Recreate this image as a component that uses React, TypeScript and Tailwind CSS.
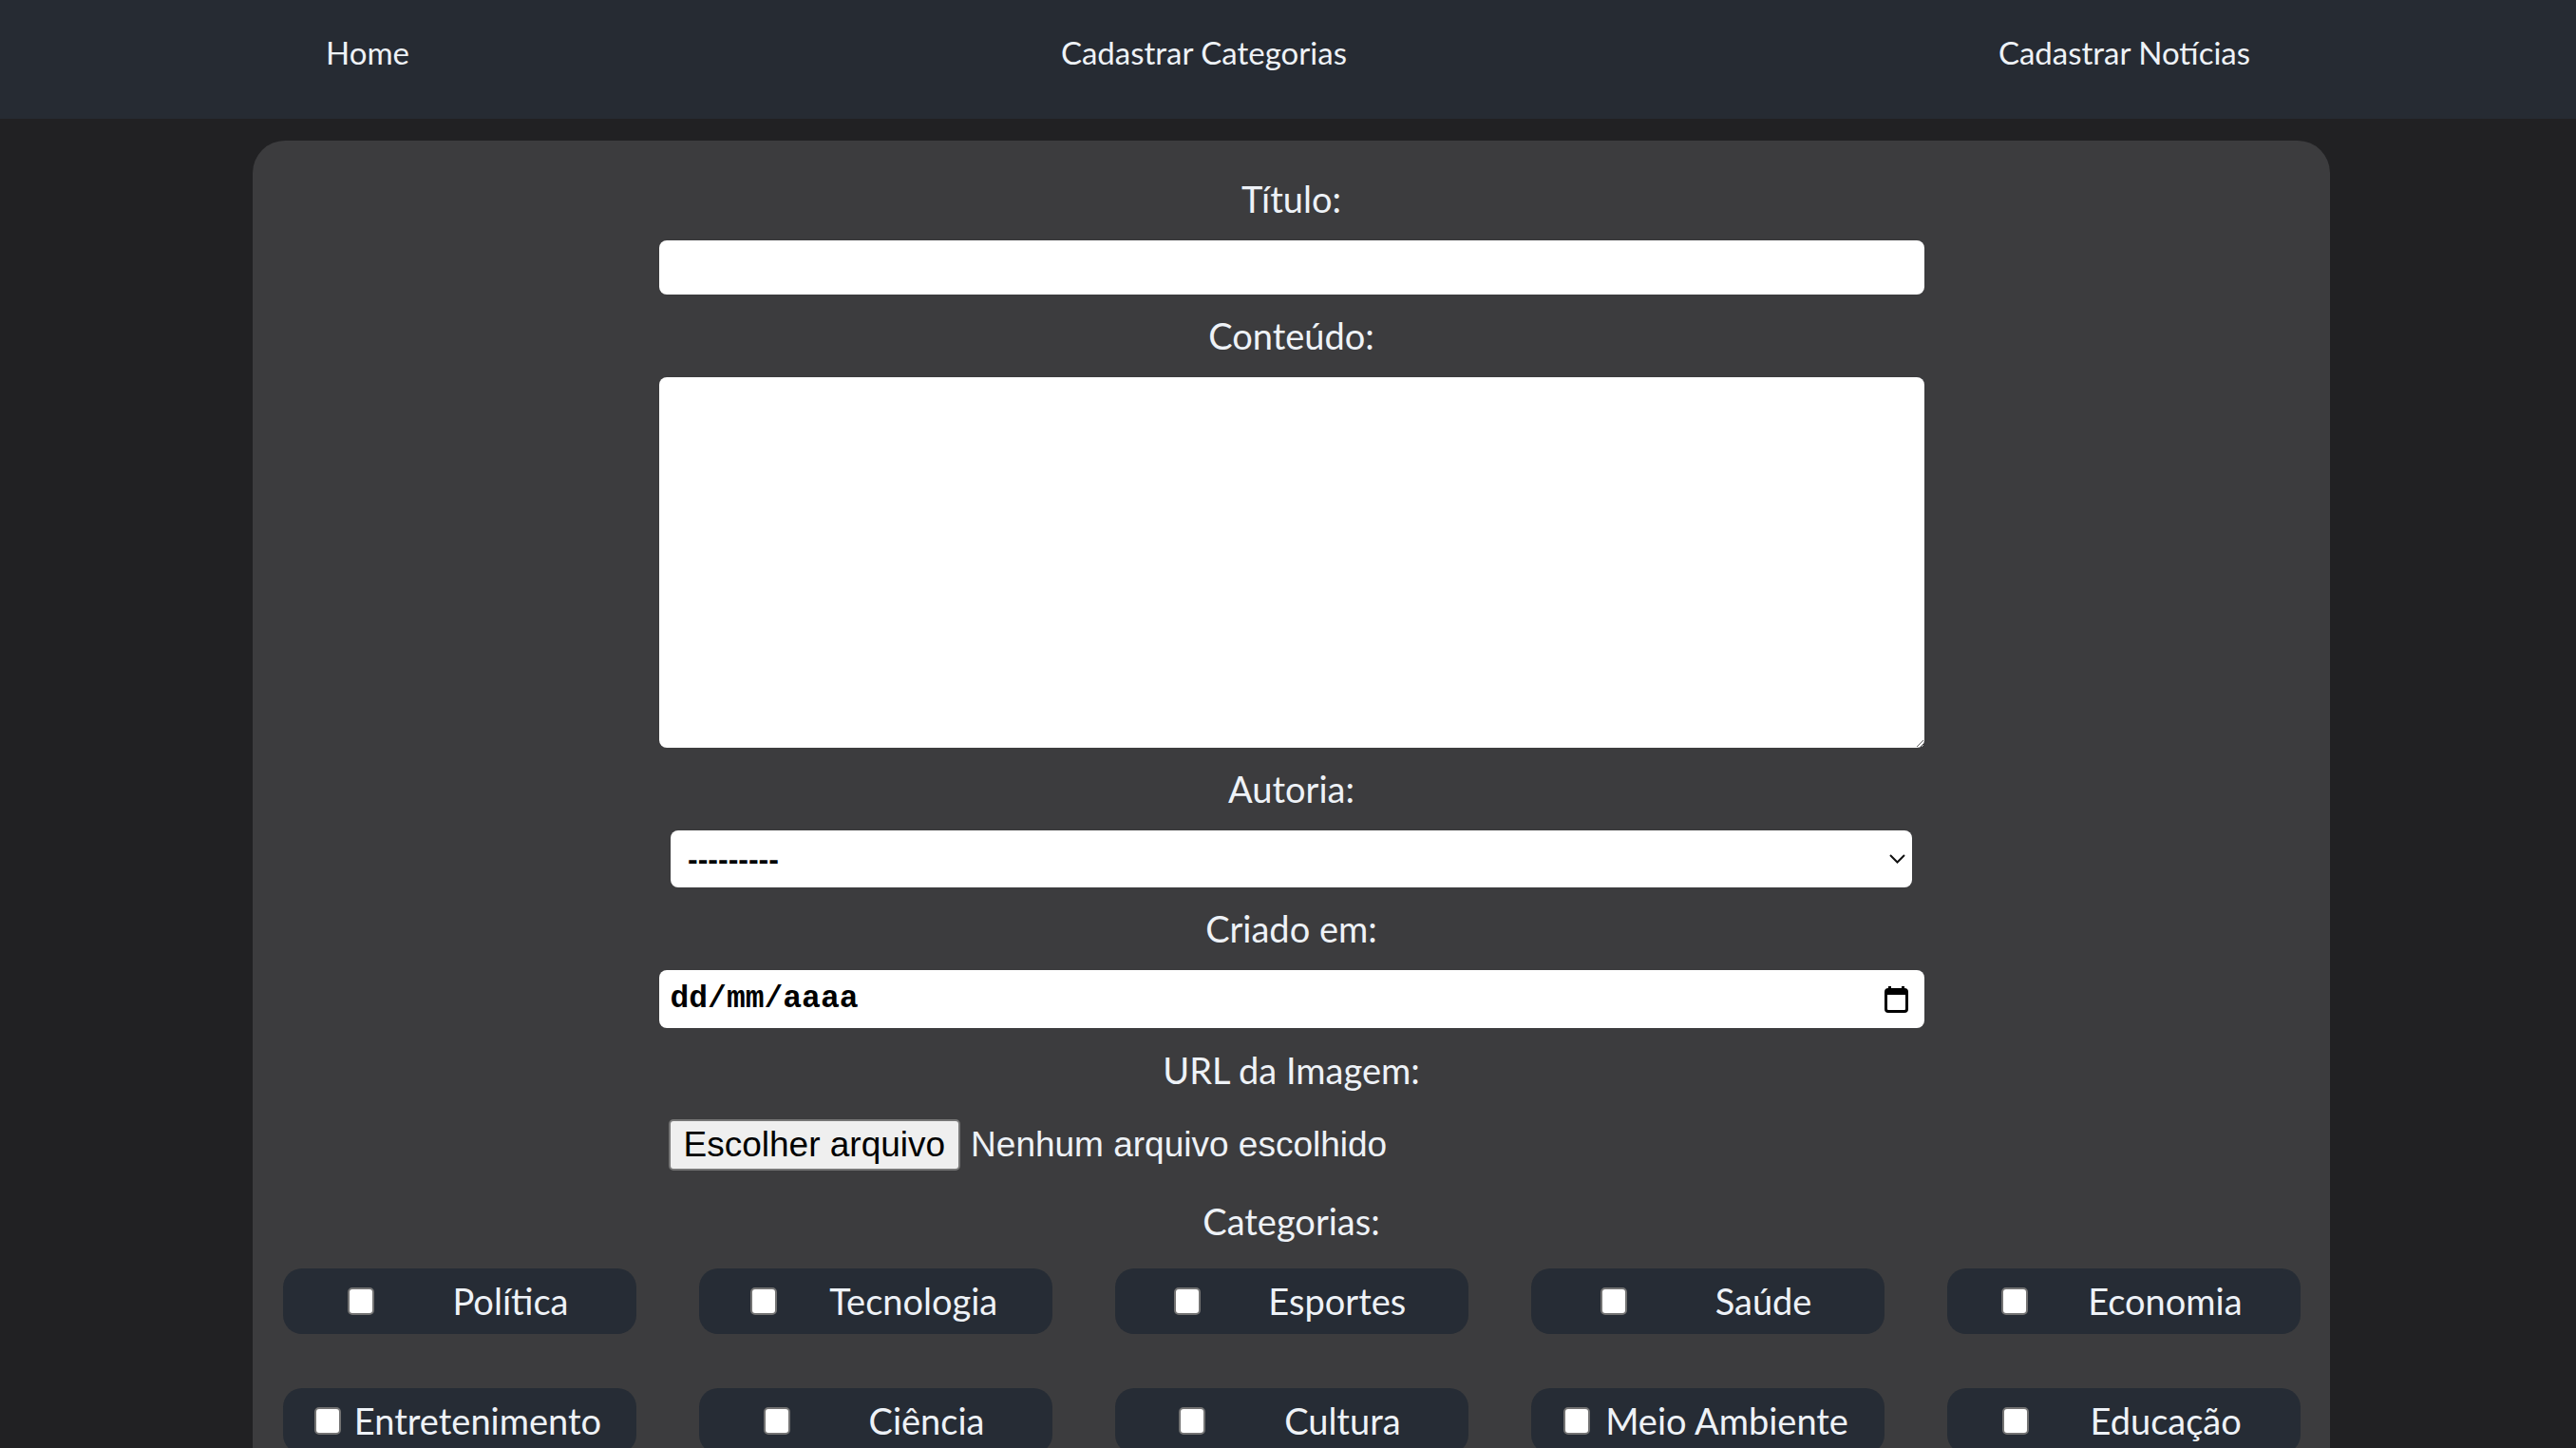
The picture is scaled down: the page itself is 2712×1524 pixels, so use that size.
import React from "react";

const categorias = [
    "Política",
    "Tecnologia",
    "Esportes",
    "Saúde",
    "Economia",
    "Entretenimento",
    "Ciência",
    "Cultura",
    "Meio Ambiente",
    "Educação",
];

const CalendarIcon: React.FC = () => (
    <svg width="25" height="28" viewBox="0 0 25 28" fill="none">
        <rect x="4" y="0" width="3" height="5" fill="#000" />
        <rect x="18" y="0" width="3" height="5" fill="#000" />
        <rect x="1.5" y="3.5" width="22" height="23" rx="2.5" stroke="#000" strokeWidth="3" />
        <rect x="1" y="3" width="23" height="6" fill="#000" />
    </svg>
);

const Chevron: React.FC = () => (
    <svg width="17" height="10" viewBox="0 0 17 10" fill="none">
        <path d="M1 1 L8.5 8.5 L16 1" stroke="#111" strokeWidth="2" />
    </svg>
);

// labels: 2px top padding pushes the text down to the reference baseline
const Label: React.FC<{ text: string; className?: string }> = ({ text, className }) => (
    <label className={`block pt-[2px] text-center text-[38px] leading-[47px] text-[#eef2f7] ${className ?? ""}`}>
        {text}
    </label>
);

export default function App() {
    return (
        <div className="min-h-screen bg-[#212123] font-[Lato,sans-serif] overflow-hidden">
            <header className="h-[125px] bg-[#262b33] pt-[35px]">
                <nav className="flex justify-around items-start text-[33px] leading-[40px] text-[#eef2f7]">
                    <a href="#">Home</a>
                    <a href="#">Cadastrar Categorias</a>
                    <a href="#">Cadastrar Notícias</a>
                </nav>
            </header>

            <main className="ml-[266px] mt-[23px] w-[2187px] rounded-[34px] bg-[#3c3c3e] px-[32px] pt-[36px] pb-[60px]">
                <form className="flex flex-col items-center">
                    <Label text="Título:" />
                    <input type="text" className="mt-[20px] h-[57px] w-[1332px] rounded-[8px] bg-white px-3 text-[30px] outline-none" />

                    <Label text="Conteúdo:" className="mt-[18px]" />
                    <textarea className="mt-[20px] h-[390px] w-[1332px] rounded-[8px] bg-white p-3 text-[30px] outline-none" />

                    <Label text="Autoria:" className="mt-[18px]" />
                    <div className="mt-[20px] flex h-[60px] w-[1307px] items-center justify-between rounded-[8px] bg-white pl-[18px] pr-[7px]">
                        <span className="font-['Liberation_Sans',Arial,sans-serif] text-[32px] font-bold leading-none text-black">---------</span>
                        <Chevron />
                    </div>

                    <Label text="Criado em:" className="mt-[18px]" />
                    <div className="mt-[20px] flex h-[61px] w-[1332px] items-center justify-between rounded-[8px] bg-white pl-[12px] pr-[17px]">
                        <span className="font-['Liberation_Mono',monospace] text-[33px] font-semibold leading-none text-black">dd/mm/aaaa</span>
                        <CalendarIcon />
                    </div>

                    <Label text="URL da Imagem:" className="mt-[19px]" />
                    <div className="mt-[27px] flex w-[1332px] items-center gap-[11px] pl-[10px] font-['Liberation_Sans',Arial,sans-serif] text-[37px]">
                        <button type="button" className="h-[54px] rounded-[5px] border-2 border-[#767676] bg-[#efefef] px-[14px] leading-none text-black">
                            Escolher arquivo
                        </button>
                        <span className="text-[#eef2f7]">Nenhum arquivo escolhido</span>
                    </div>

                    <Label text="Categorias:" className="mt-[27px]" />
                    <div className="mt-[26px] grid grid-cols-[repeat(5,372px)] gap-x-[66px] gap-y-[57px] self-start">
                        {categorias.map((cat) => (
                            <label
                                key={cat}
                                className="flex h-[69px] items-center justify-around rounded-[20px] bg-[#262c35] pl-[26px] pr-[30px] text-[38px] text-[#eef2f7]"
                            >
                                <input
                                    type="checkbox"
                                    className="h-[29px] w-[28px] shrink-0 appearance-none rounded-[5px] border-2 border-[#737373] bg-white"
                                />
                                <span className="leading-[46px]">{cat}</span>
                            </label>
                        ))}
                    </div>
                </form>
            </main>
        </div>
    );
}
